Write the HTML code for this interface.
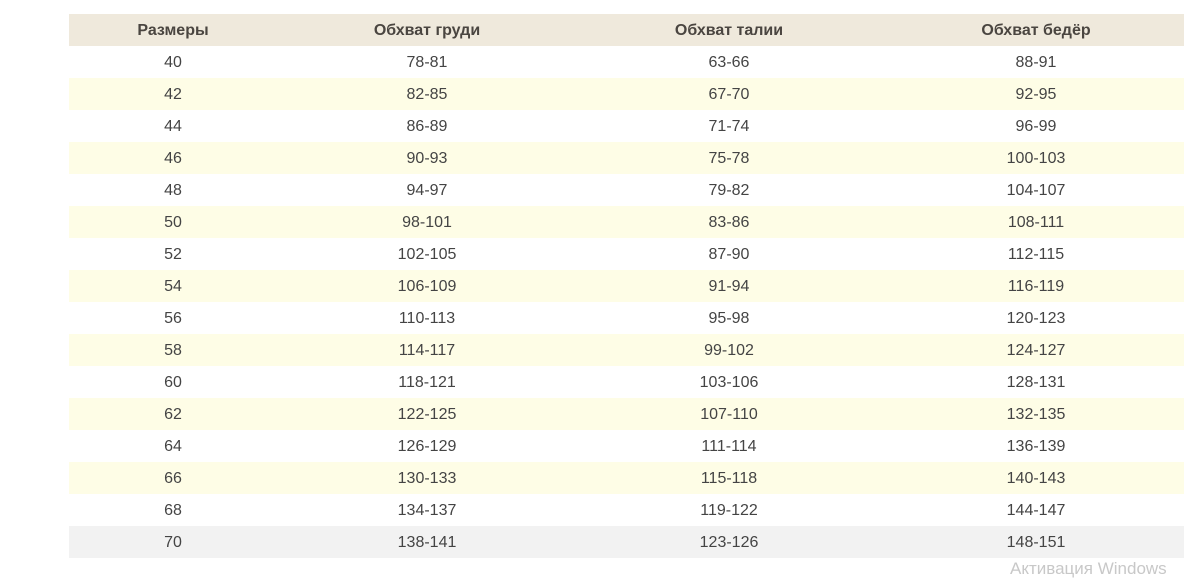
<!DOCTYPE html>
<html><head><meta charset="utf-8"><style>
html,body{margin:0;padding:0;background:#fff;width:1184px;height:566px;overflow:hidden}
table{position:absolute;left:69px;top:14px;border-collapse:collapse;font-family:"Liberation Sans",Arial,sans-serif;font-size:16px;color:#444;table-layout:fixed;width:1122px}
td,th{height:32px;padding:2px 0 0 0;box-sizing:border-box;text-align:center;vertical-align:middle}
th{background:#efe9dc;font-weight:bold;color:#4a4540}
tr.y td{background:#fefde6}
tr.g td{background:#f2f2f2}
.wm{position:absolute;left:1010px;top:559px;font-family:"Liberation Sans",sans-serif;font-size:17px;color:#c8c8c8}
</style></head><body>
<table>
<colgroup><col style="width:208px"><col style="width:300px"><col style="width:304px"><col style="width:310px"></colgroup>
<tr><th>Размеры</th><th>Обхват груди</th><th>Обхват талии</th><th>Обхват бедёр</th></tr>
<tr><td>40</td><td>78-81</td><td>63-66</td><td>88-91</td></tr>
<tr class="y"><td>42</td><td>82-85</td><td>67-70</td><td>92-95</td></tr>
<tr><td>44</td><td>86-89</td><td>71-74</td><td>96-99</td></tr>
<tr class="y"><td>46</td><td>90-93</td><td>75-78</td><td>100-103</td></tr>
<tr><td>48</td><td>94-97</td><td>79-82</td><td>104-107</td></tr>
<tr class="y"><td>50</td><td>98-101</td><td>83-86</td><td>108-111</td></tr>
<tr><td>52</td><td>102-105</td><td>87-90</td><td>112-115</td></tr>
<tr class="y"><td>54</td><td>106-109</td><td>91-94</td><td>116-119</td></tr>
<tr><td>56</td><td>110-113</td><td>95-98</td><td>120-123</td></tr>
<tr class="y"><td>58</td><td>114-117</td><td>99-102</td><td>124-127</td></tr>
<tr><td>60</td><td>118-121</td><td>103-106</td><td>128-131</td></tr>
<tr class="y"><td>62</td><td>122-125</td><td>107-110</td><td>132-135</td></tr>
<tr><td>64</td><td>126-129</td><td>111-114</td><td>136-139</td></tr>
<tr class="y"><td>66</td><td>130-133</td><td>115-118</td><td>140-143</td></tr>
<tr><td>68</td><td>134-137</td><td>119-122</td><td>144-147</td></tr>
<tr class="g"><td>70</td><td>138-141</td><td>123-126</td><td>148-151</td></tr>
</table>
<div class="wm">Активация Windows</div>
</body></html>
